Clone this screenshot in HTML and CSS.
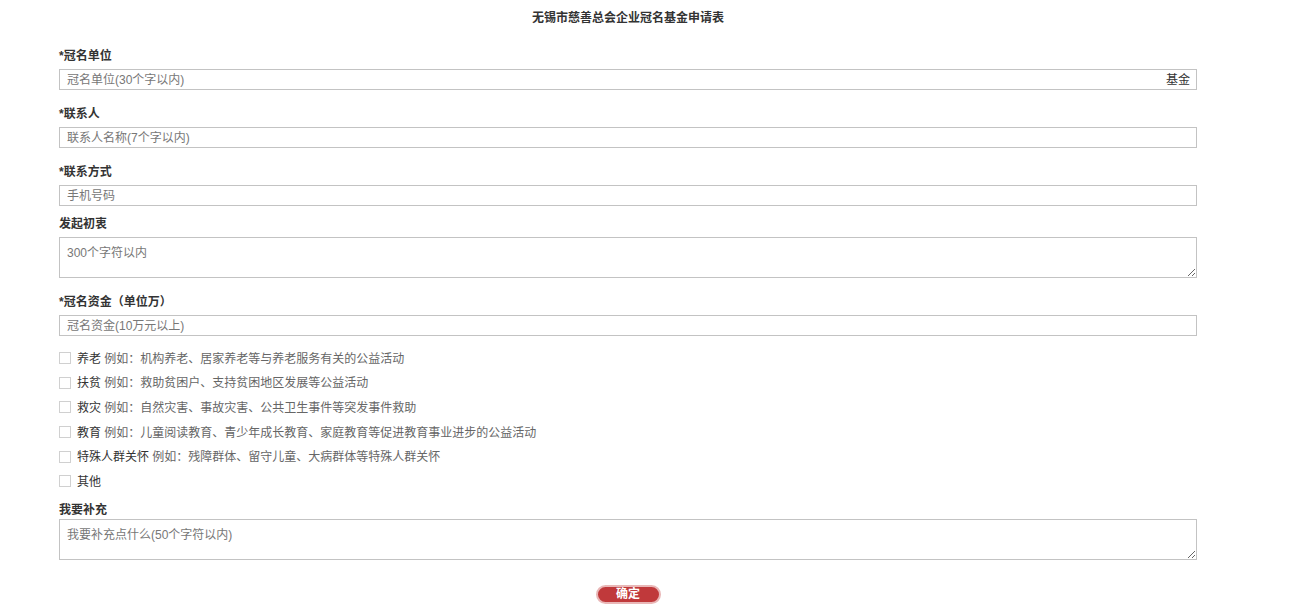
FILE: index.html
```html
<!DOCTYPE html>
<html lang="zh-CN">
<head>
    <meta charset="UTF-8">
    <meta name="viewport" content="width=device-width, initial-scale=1.0">
    <title>无锡市慈善总会企业冠名基金申请表</title>
    <link rel="stylesheet" href="styles.css">
</head>
<body>
<div class="pagina">
    <h1 class="titulo">无锡市慈善总会企业冠名基金申请表</h1>
    <form class="formulario" onsubmit="return false">
        <div class="campo">
            <label class="rotulo">*冠名单位</label>
            <div class="caixa">
                <input class="entrada" type="text" placeholder="冠名单位(30个字以内)">
                <span class="sufixo">基金</span>
            </div>
        </div>
        <div class="campo">
            <label class="rotulo">*联系人</label>
            <input class="entrada" type="text" placeholder="联系人名称(7个字以内)">
        </div>
        <div class="campo curto">
            <label class="rotulo">*联系方式</label>
            <input class="entrada" type="text" placeholder="手机号码">
        </div>
        <div class="campo">
            <label class="rotulo">发起初衷</label>
            <textarea class="area" placeholder="300个字符以内"></textarea>
        </div>
        <div class="campo">
            <label class="rotulo">*冠名资金（单位万）</label>
            <input class="entrada" type="text" placeholder="冠名资金(10万元以上)">
        </div>
        <div class="opcoes">
            <label class="opcao"><span class="marca"></span>养老 <em>例如：机构养老、居家养老等与养老服务有关的公益活动</em></label>
            <label class="opcao"><span class="marca"></span>扶贫 <em>例如：救助贫困户、支持贫困地区发展等公益活动</em></label>
            <label class="opcao"><span class="marca"></span>救灾 <em>例如：自然灾害、事故灾害、公共卫生事件等突发事件救助</em></label>
            <label class="opcao"><span class="marca"></span>教育 <em>例如：儿童阅读教育、青少年成长教育、家庭教育等促进教育事业进步的公益活动</em></label>
            <label class="opcao"><span class="marca"></span>特殊人群关怀 <em>例如：残障群体、留守儿童、大病群体等特殊人群关怀</em></label>
            <label class="opcao"><span class="marca"></span>其他</label>
        </div>
        <div class="campo junto">
            <label class="rotulo">我要补充</label>
            <textarea class="area" placeholder="我要补充点什么(50个字符以内)"></textarea>
        </div>
        <div class="rodape">
            <button class="btn">确定</button>
        </div>
    </form>
</div>
</body>
</html>
```

FILE: styles.css
```css
body {
    margin: 0;
    padding: 0;
    background-color: #fff;
    font-family: "Liberation Sans", "Noto Sans CJK SC", sans-serif;
    font-size: 12px;
    color: #333;
}

.pagina {
    width: 1138px;
    margin-left: 59px;
}

.titulo {
    margin: 0;
    padding-top: 10px;
    height: 38px;
    font-size: 12px;
    line-height: 16px;
    text-align: center;
    color: #333;
}

.campo {
    margin-bottom: 16px;
}

.campo.curto {
    margin-bottom: 10px;
}

.rotulo {
    display: block;
    font-weight: bold;
    line-height: 16px;
    margin-bottom: 5px;
}

.campo.junto .rotulo {
    margin-bottom: 1px;
}

.caixa {
    position: relative;
}

.sufixo {
    position: absolute;
    right: 7px;
    top: 3px;
    line-height: 16px;
    color: #333;
}

.entrada,
.area {
    display: block;
    box-sizing: border-box;
    width: 100%;
    margin: 0;
    border: 1px solid #c3c3c3;
    padding: 0 7px;
    font-family: inherit;
    font-size: 12px;
    color: #333;
    outline: none;
}

.entrada {
    height: 21px;
}

.area {
    height: 41px;
    padding-top: 7px;
    line-height: 16px;
}

.entrada::placeholder,
.area::placeholder {
    color: #777;
}

.opcoes {
    margin-top: -7px;
    margin-bottom: 9px;
}

.opcao {
    display: flex;
    align-items: center;
    height: 24.6px;
    white-space: pre;
}

.marca {
    width: 10px;
    height: 10px;
    border: 1px solid #d0d0d0;
    margin-right: 6px;
    margin-top: 2px;
}

.opcao em {
    font-style: normal;
    color: #666;
}

.rodape {
    display: flex;
    justify-content: center;
    padding-top: 9px;
}

.btn {
    width: 65px;
    height: 19px;
    padding: 0;
    border: 2px solid #e9b7b7;
    border-radius: 10px;
    background-color: #c0393b;
    color: #fff;
    font-family: inherit;
    font-size: 12px;
    font-weight: bold;
    line-height: 15px;
    cursor: pointer;
}
```
